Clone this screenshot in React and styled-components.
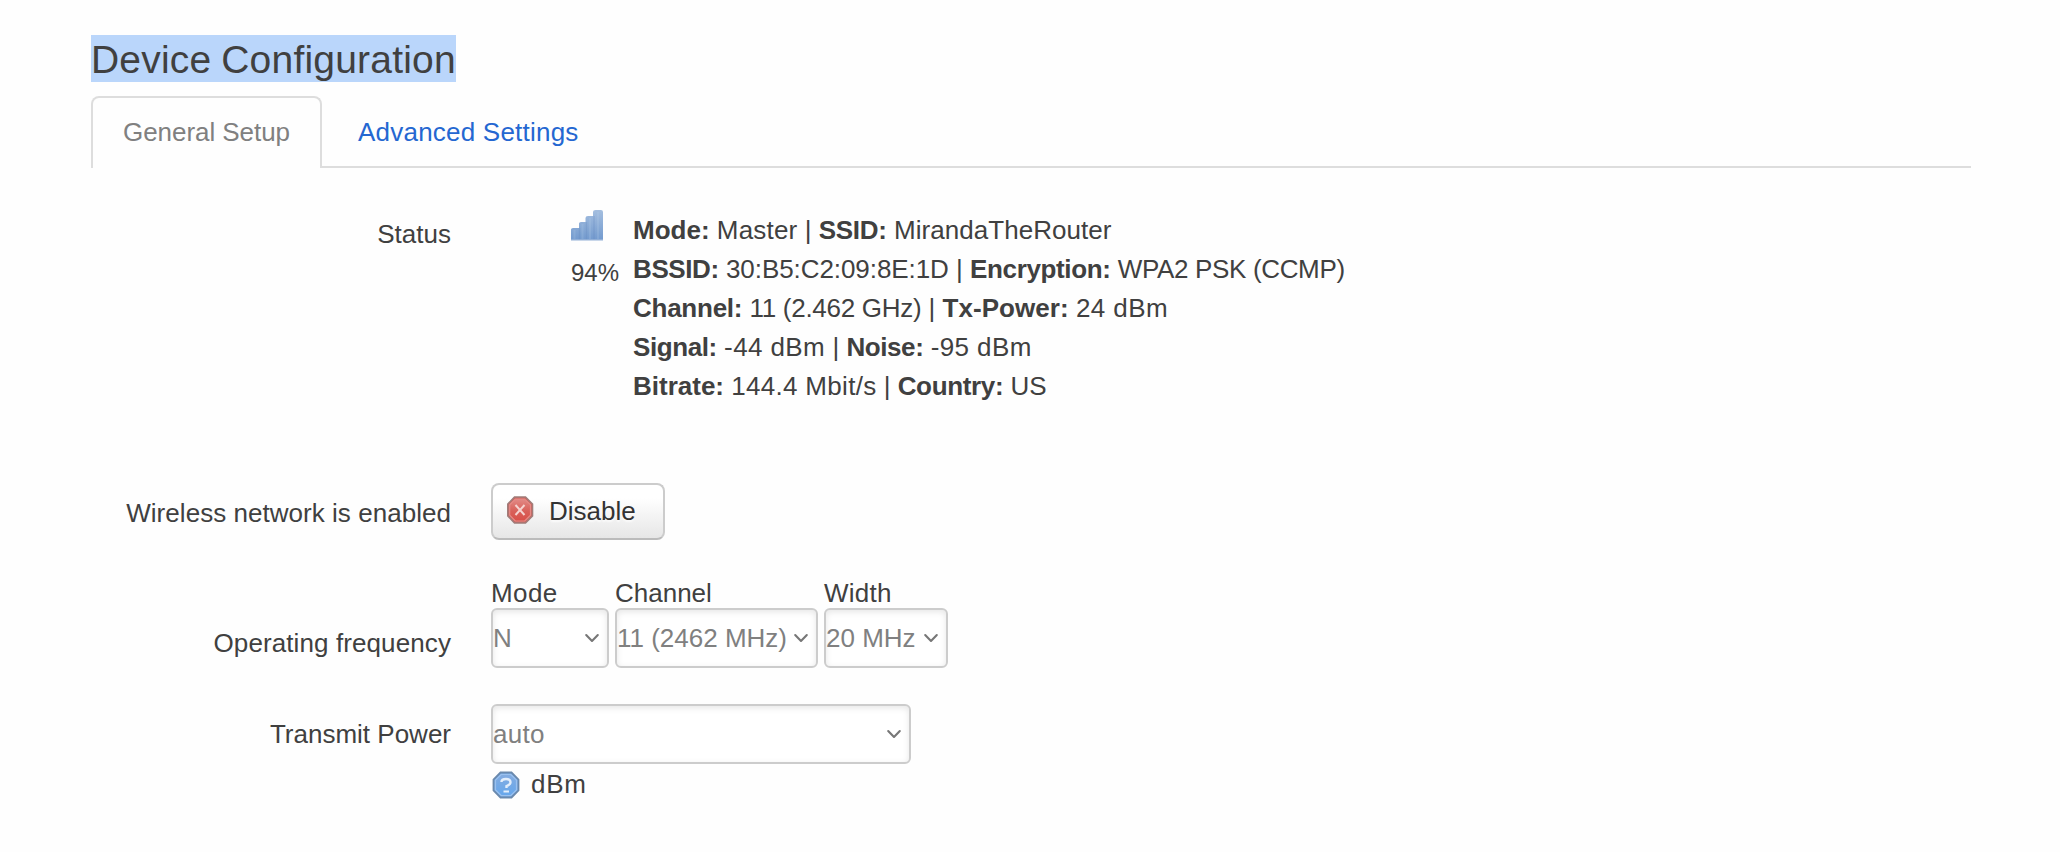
import React from "react";
import styled, { createGlobalStyle } from "styled-components";

const GlobalStyle = createGlobalStyle`
  body {
    margin: 0;
    background: #fefefe;
    color: #404040;
    font-family: "Liberation Sans", Arial, sans-serif;
    font-size: 26px;
    line-height: 39px;
    -webkit-font-smoothing: antialiased;
  }
`;

const Page = styled.main`
  padding: 35px 89px 0 91px;
`;

const Title = styled.h2`
  display: flex;
  margin: 0 0 14px;
  font-size: 39px;
  font-weight: normal;
  line-height: 45px;
  letter-spacing: 0.2px;
  word-spacing: -1.2px;
`;

const Highlight = styled.span`
  padding-top: 2px;
  background: #bad6fb;
`;

const Tabs = styled.nav`
  display: flex;
  height: 70px;
  border-bottom: 2px solid #dddddd;
`;

const Tab = styled.a`
  box-sizing: border-box;
  height: ${(p) => (p.$active ? 72 : 70)}px;
  width: ${(p) => (p.$active ? "231px" : "auto")};
  padding: ${(p) => (p.$active ? "15px 0 0 30px" : "17px 36px 0")};
  border: ${(p) => (p.$active ? "2px solid #dddddd" : "0")};
  border-bottom: 0;
  border-radius: 8px 8px 0 0;
  background: #fefefe;
  color: ${(p) => (p.$active ? "#808080" : "#2467d1")};
  letter-spacing: ${(p) => (p.$active ? -0.05 : 0.22)}px;
  white-space: nowrap;
`;

const Form = styled.form`
  padding-top: 42px;
`;

const Row = styled.div`
  display: grid;
  grid-template-columns: 360px 1fr;
  column-gap: 40px;
  align-items: start;
  margin-bottom: ${(p) => p.$gap}px;
`;

const Label = styled.label`
  padding-top: ${(p) => p.$drop}px;
  text-align: right;
  white-space: nowrap;
  letter-spacing: ${(p) => p.$track || 0}px;
`;

const Status = styled.div`
  display: flex;
  padding-left: 80px;
`;

const Signal = styled.div`
  width: 62px;
  font-size: 24px;

  svg {
    display: block;
    margin-bottom: 12px;
  }
`;

const Facts = styled.div`
  padding-top: 1px;
  white-space: nowrap;
`;

const Name = styled.b`
  letter-spacing: ${(p) => p.$track || 0}px;
`;

const Value = styled.span`
  letter-spacing: ${(p) => p.$track || 0}px;
`;

const Button = styled.button`
  display: flex;
  align-items: center;
  box-sizing: border-box;
  width: 174px;
  height: 57px;
  padding: 0 0 1px 14px;
  gap: 15px;
  border: 2px solid #cccccc;
  border-bottom-color: #bbbbbb;
  border-radius: 8px;
  background: linear-gradient(#ffffff 0%, #ffffff 25%, #e6e6e6 100%);
  color: #333333;
  font: inherit;
  text-shadow: 0 2px 2px rgba(255, 255, 255, 0.75);

  svg {
    margin-bottom: 2px;
  }
`;

const Selects = styled.div`
  display: flex;
  gap: 6px;
`;

const Field = styled.div`
  display: flex;
  flex-direction: column;
`;

const Caption = styled.span`
  height: 34px;
  letter-spacing: ${(p) => p.$track || 0}px;
`;

const Select = styled.div`
  display: flex;
  align-items: center;
  justify-content: space-between;
  box-sizing: border-box;
  width: ${(p) => p.$width}px;
  height: 60px;
  padding-right: 7px;
  border: 2px solid #cccccc;
  border-radius: 6px;
  background: #ffffff;
  box-shadow: inset 0 2px 6px rgba(0, 0, 0, 0.1);
  color: #808080;
  white-space: nowrap;
  letter-spacing: ${(p) => p.$track || 0}px;
`;

const Hint = styled.div`
  display: flex;
  align-items: center;
  gap: 11px;
  height: 39px;
  padding: 1px 0 0 1px;
  letter-spacing: 0.7px;
`;

function Chevron() {
  return (
    <svg width="16" height="12" viewBox="0 0 16 12" fill="none">
      <path d="M2.200 3 8 9l5.800-6" stroke="#777" strokeWidth="2.1" strokeLinecap="round" strokeLinejoin="round" />
    </svg>
  );
}

function SignalIcon() {
  return (
    <svg width="32" height="31" viewBox="0 0 32 31">
      <defs>
        <linearGradient id="bars" x1="0" y1="0" x2="0" y2="31" gradientUnits="userSpaceOnUse">
          <stop offset="0" stopColor="#a4bedf" />
          <stop offset="1" stopColor="#7199ce" />
        </linearGradient>
      </defs>
      <path d="M0 19.5Q0 18 2 18H8V13.5Q8 12 10 12H14.500V8Q14.500 6 17 6H22V2Q22 0 24.500 0H30Q32 0 32 2V30H0Z" fill="url(#bars)" />
      <path d="M8.500 18V30M15.500 12V30M23 6V30" stroke="#6389bd" strokeOpacity=".3" strokeWidth="1.3" />
      <path d="M3.500 20V29M11.500 14V29M19 8V29M27 2V29" stroke="#b9d0ed" strokeOpacity=".2" strokeWidth="2" />
      <path d="M0 30H32" stroke="#a6bddd" strokeWidth="1.2" />
    </svg>
  );
}

function StopIcon() {
  return (
    <svg width="27" height="28" viewBox="0 0 27 28">
      <defs>
        <linearGradient id="stop" x1="0" y1="0" x2="0" y2="1">
          <stop offset="0" stopColor="#e28a86" />
          <stop offset=".55" stopColor="#d86059" />
          <stop offset="1" stopColor="#d94f48" />
        </linearGradient>
      </defs>
      <path d="M7.500 1H18.500L25.500 8V20L18.500 27H7.500L.800 20V8Z" fill="#cf605c" stroke="#a07d7a" strokeWidth="1.6" />
      <path d="M8.300 3H17.700L23.500 8.800V19.200L17.700 25H8.300L2.700 19.200V8.800Z" fill="url(#stop)" stroke="#e48b86" strokeWidth="1.2" />
      <path d="M8.500 9 17.500 19M17.500 9 8.500 19" stroke="#f5d3d0" strokeWidth="2" />
    </svg>
  );
}

function HelpIcon() {
  return (
    <svg width="28" height="28" viewBox="0 0 28 28">
      <defs>
        <linearGradient id="help" x1="0" y1="0" x2="0" y2="1">
          <stop offset="0" stopColor="#84ace0" />
          <stop offset="1" stopColor="#66a7ec" />
        </linearGradient>
      </defs>
      <path d="M8.500 1.500H19.500L26.500 8.500V19.500L19.500 26.500H8.500L1.500 19.500V8.500Z" fill="#79ace6" stroke="#6a89ad" strokeWidth="1.8" />
      <path d="M9.200 3.500H18.800L24.500 9.200V18.800L18.800 24.500H9.200L3.500 18.800V9.200Z" fill="url(#help)" stroke="#9bc1ee" strokeWidth="1.2" />
      <path d="M9.500 11Q9.500 8 14 8T18.500 11.200Q18.500 13.500 14.500 15V17" fill="none" stroke="#e3eefb" strokeWidth="2.400" />
      <path d="M11.500 20.500H17" stroke="#e3eefb" strokeWidth="2" />
    </svg>
  );
}

function Dropdown({ width, track, children }) {
  return (
    <Select $width={width} $track={track}>
      {children}
      <Chevron />
    </Select>
  );
}

const facts = [
  [["Mode:", 0, "Master", 0.2], ["SSID:", -0.25, "MirandaTheRouter", 0.05]],
  [["BSSID:", -0.4, "30:B5:C2:09:8E:1D", -0.07], ["Encryption:", -0.35, "WPA2 PSK (CCMP)", -0.35]],
  [["Channel:", -0.25, "11 (2.462 GHz)", -0.28], ["Tx-Power:", 0.05, "24 dBm", 0.4]],
  [["Signal:", -0.4, "-44 dBm", 0.4], ["Noise:", -0.4, "-95 dBm", 0.4]],
  [["Bitrate:", 0, "144.4 Mbit/s", 0.3], ["Country:", -0.35, "US", 0]],
];

export default function App() {
  return (
    <Page>
      <GlobalStyle />
      <Title><Highlight>Device Configuration</Highlight></Title>
      <Tabs>
        <Tab $active>General Setup</Tab>
        <Tab>Advanced Settings</Tab>
      </Tabs>
      <Form>
        <Row $gap={77}>
          <Label $drop={5}>Status</Label>
          <Status>
            <Signal>
              <SignalIcon />
              94%
            </Signal>
            <Facts>
              {facts.map((line) => (
                <div key={line[0][0]}>
                  {line.map(([name, nameTrack, value, valueTrack], i) => (
                    <React.Fragment key={name}>
                      {i > 0 && " | "}
                      <Name $track={nameTrack}>{name}</Name>{" "}
                      <Value $track={valueTrack}>{value}</Value>
                    </React.Fragment>
                  ))}
                </div>
              ))}
            </Facts>
          </Status>
        </Row>
        <Row $gap={34}>
          <Label $drop={11} $track={0.04}>Wireless network is enabled</Label>
          <Button type="button"><StopIcon />Disable</Button>
        </Row>
        <Row $gap={36}>
          <Label $drop={50} $track={0.1}>Operating frequency</Label>
          <Selects>
            <Field><Caption $track={0.4}>Mode</Caption><Dropdown width={118}>N</Dropdown></Field>
            <Field><Caption>Channel</Caption><Dropdown width={203}>11 (2462 MHz)</Dropdown></Field>
            <Field><Caption $track={0.25}>Width</Caption><Dropdown width={124}>20 MHz</Dropdown></Field>
          </Selects>
        </Row>
        <Row $gap={0}>
          <Label $drop={11}>Transmit Power</Label>
          <div>
            <Dropdown width={420} track={0.3}>auto</Dropdown>
            <Hint><HelpIcon />dBm</Hint>
          </div>
        </Row>
      </Form>
    </Page>
  );
}
